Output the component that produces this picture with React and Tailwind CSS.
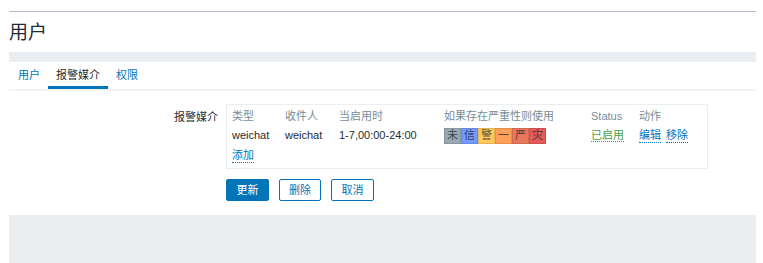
const FONT = "font-['Liberation_Sans','Noto_Sans_CJK_SC',sans-serif]"

const severities = [
  { label: '未', bg: 'bg-[#97aab3]' },
  { label: '信', bg: 'bg-[#7499ff]' },
  { label: '警', bg: 'bg-[#ffc859]' },
  { label: '一', bg: 'bg-[#ffa059]' },
  { label: '严', bg: 'bg-[#e97659]' },
  { label: '灾', bg: 'bg-[#e45959]' },
]

function Link({ children, className = '' }) {
  return (
    <span className={`border-b border-dotted border-[#0275b8] leading-[13px] text-[#0275b8] ${className}`}>
      {children}
    </span>
  )
}

export default function App() {
  return (
    <div className={`${FONT} h-screen overflow-hidden bg-white pl-[9px] pr-[7px] pt-[11px] text-[11px] text-[#1f2c33]`}>
      {/* Header */}
      <div className="border-t border-[#b2b7cc]">
        <div className="flex h-[40px] items-center">
          <h1 className="text-[19px] leading-none font-normal">用户</h1>
        </div>
        <div className="h-[10px] bg-[#ebeef0]" />
      </div>

      {/* Tabs */}
      <div className="flex border-b-2 border-[#f3f4f5] pl-[1px]">
        <span className="flex h-[27px] items-center px-[8px] text-[#0275b8]">用户</span>
        <span className="flex h-[27px] items-center border-b-[3px] border-[#0275b8] px-[8px] pt-[3px] text-[#1f2c33]">
          报警媒介
        </span>
        <span className="flex h-[27px] items-center px-[8px] text-[#0275b8]">权限</span>
      </div>

      {/* Form */}
      <div className="pt-[13px]">
        <div className="flex gap-[8px]">
          <div className="w-[209px] pt-[5px] text-right">报警媒介</div>
          <div className="w-[482px] border border-[#ebeef0] pt-[2px] pb-[2px]">
            <div className="flex h-[19px] items-center text-[#768d99]">
              <div className="w-[53px] pl-[5px]">类型</div>
              <div className="w-[54px] pl-[5px]">收件人</div>
              <div className="w-[105px] pl-[5px]">当启用时</div>
              <div className="w-[147px] pl-[5px]">如果存在严重性则使用</div>
              <div className="w-[48px] pl-[5px]">Status</div>
              <div className="pl-[5px]">动作</div>
            </div>
            <div className="flex h-[19px] items-center">
              <div className="w-[53px] pl-[5px]">weichat</div>
              <div className="w-[54px] pl-[5px]">weichat</div>
              <div className="w-[105px] pl-[5px]">1-7,00:00-24:00</div>
              <div className="flex w-[147px] pl-[5px]">
                {severities.map((s) => (
                  <span
                    key={s.label}
                    className={`${s.bg} flex h-[16px] w-[17px] items-center justify-center border border-black/10 text-[#1f2c33]/80`}
                  >
                    {s.label}
                  </span>
                ))}
              </div>
              <div className="w-[48px] pl-[5px]">
                <span className="border-b border-dotted border-[#429e47] text-[#429e47]">已启用</span>
              </div>
              <div className="flex gap-[5px] pl-[5px]">
                <Link>编辑</Link>
                <Link>移除</Link>
              </div>
            </div>
            <div className="flex h-[21px] items-center pl-[5px]">
              <Link>添加</Link>
            </div>
          </div>
        </div>

        {/* Buttons */}
        <div className="flex gap-[10px] pt-[10px] pl-[217px]">
          <button className="h-[22px] w-[43px] rounded-[2px] border border-[#0275b8] bg-[#0275b8] text-[11px] text-white">
            更新
          </button>
          <button className="h-[22px] w-[42px] rounded-[2px] border border-[#0275b8] bg-white text-[11px] text-[#0275b8]">
            删除
          </button>
          <button className="h-[22px] w-[43px] rounded-[2px] border border-[#0275b8] bg-white text-[11px] text-[#0275b8]">
            取消
          </button>
        </div>
      </div>

      {/* Footer area */}
      <div className="mt-[14px] h-[60px] bg-[#ebeef0]" />
    </div>
  )
}
